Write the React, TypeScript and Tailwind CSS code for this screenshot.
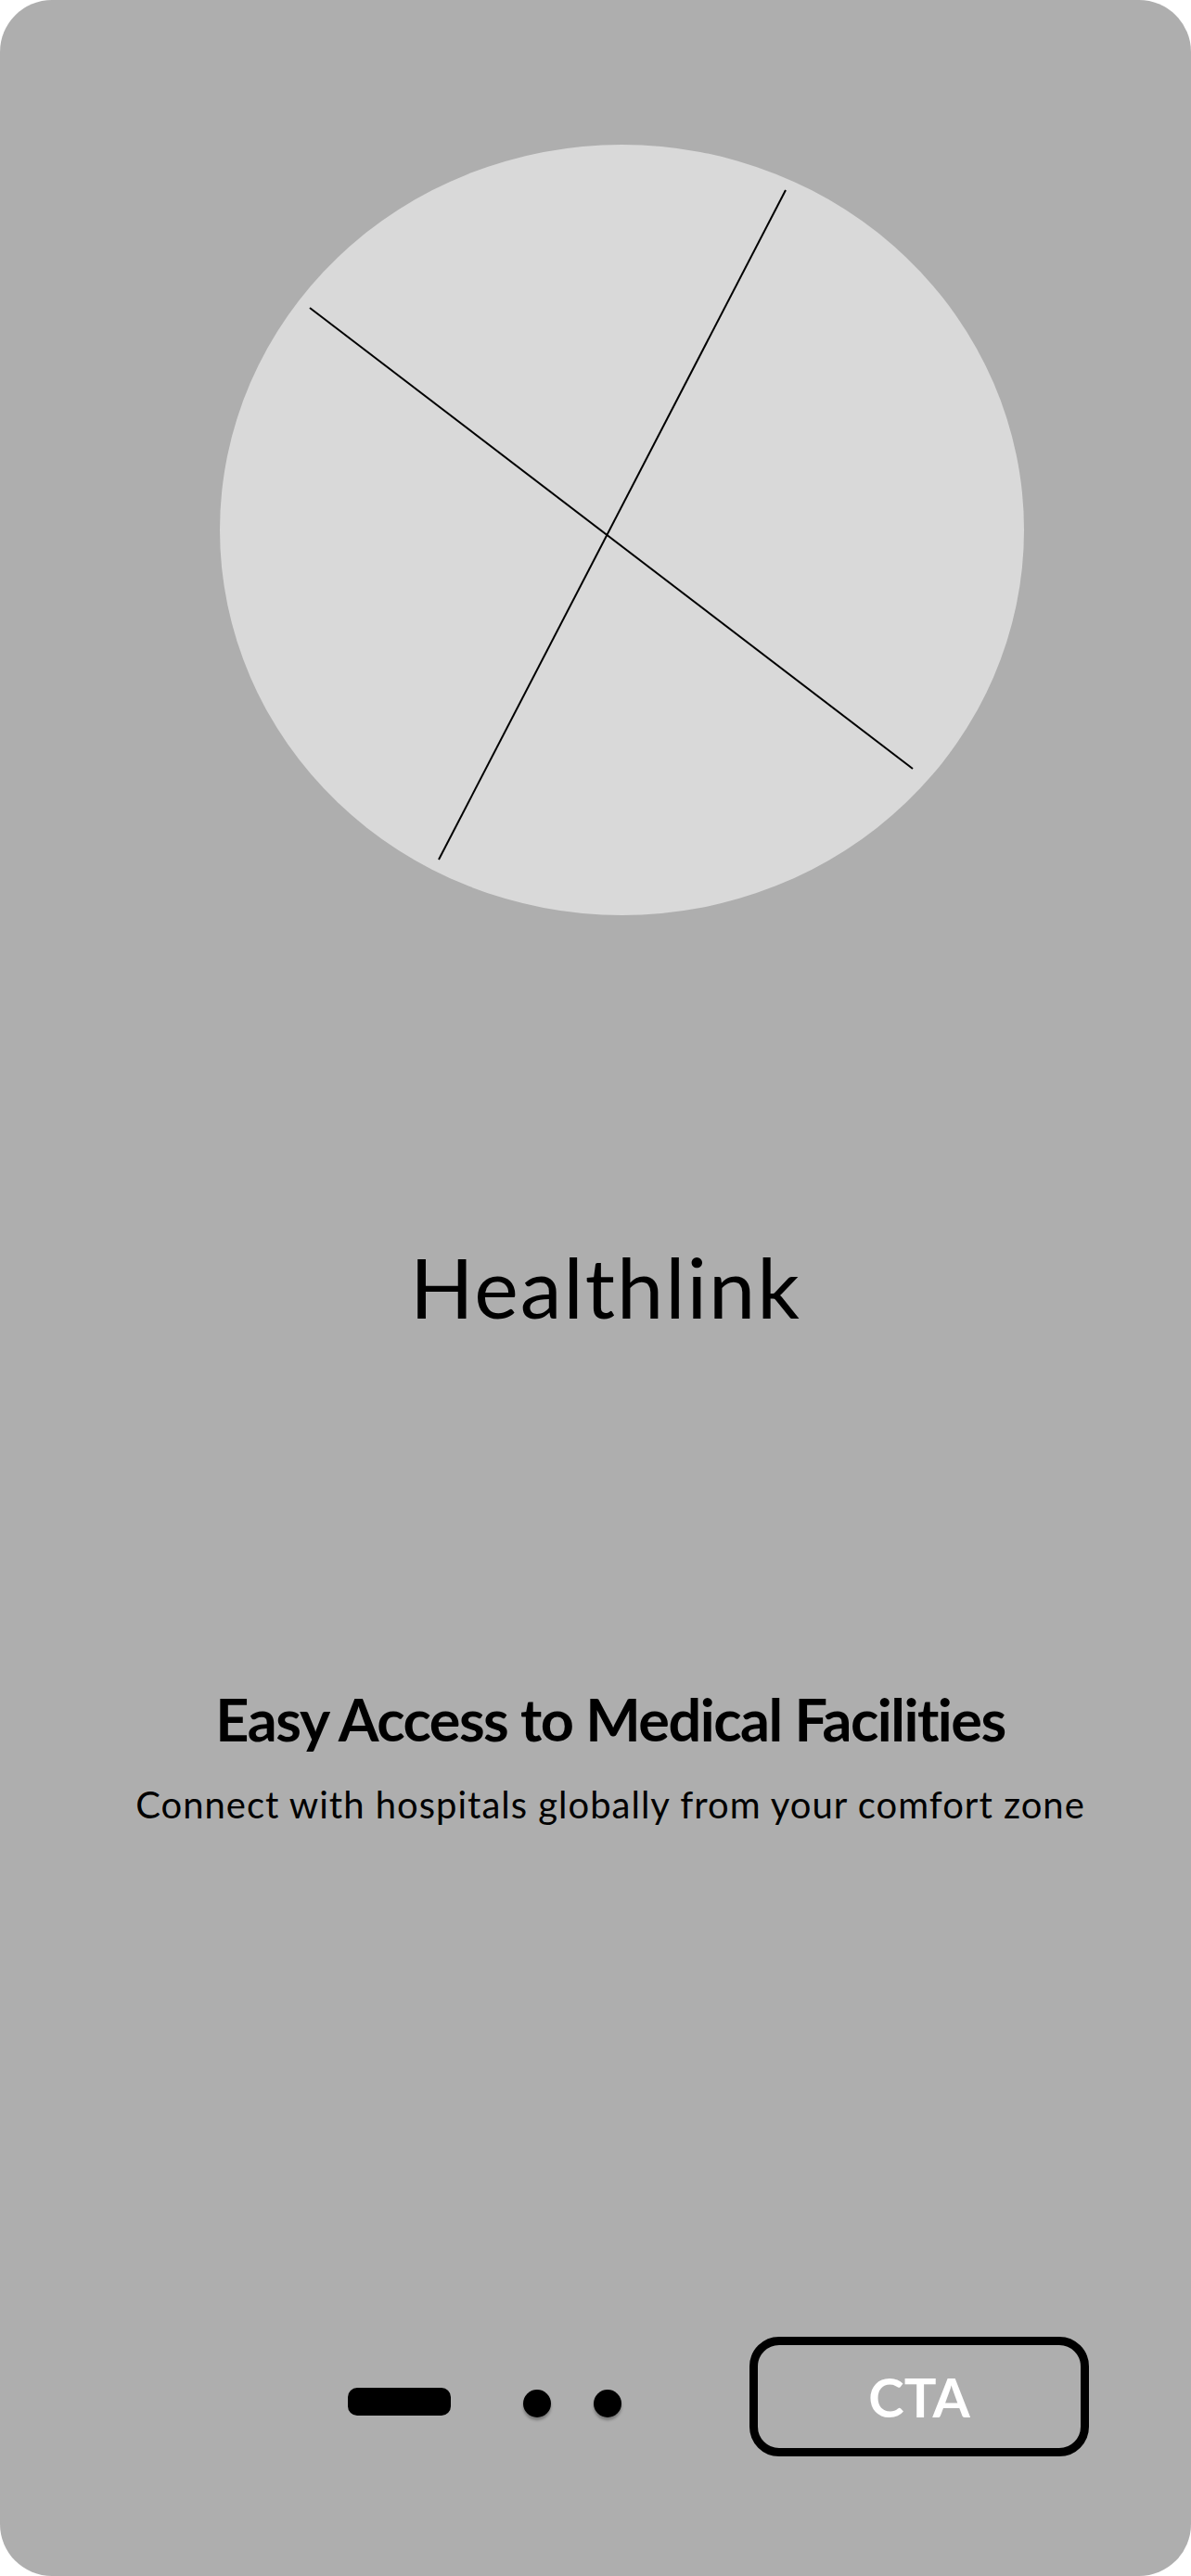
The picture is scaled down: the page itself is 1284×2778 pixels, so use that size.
import React from 'react';

const HeroPlaceholder: React.FC = () => (
    <svg width="867" height="831" viewBox="0 0 867 831" className="block">
        <ellipse cx="433.5" cy="415.5" rx="433.5" ry="415.5" fill="#d9d9d9" />
        <line x1="97" y1="176" x2="747" y2="673" stroke="#000" strokeWidth="2" />
        <line x1="610" y1="49" x2="236" y2="771" stroke="#000" strokeWidth="2" />
    </svg>
);

const App: React.FC = () => {
    return (
        <div className="w-[1284px] h-[2778px] bg-white">
            <div
                className="h-full w-full bg-[#aeaeae] rounded-[56px] flex flex-col text-black"
                style={{ fontFamily: 'Lato, "Open Sans", sans-serif' }}
            >
                {/* Hero */}
                <div className="mt-[156px] ml-[237px]">
                    <HeroPlaceholder />
                </div>

                {/* Brand */}
                <h1 className="mt-[355px] pl-[22px] text-center text-[90px] leading-none font-normal tracking-[2px]">Healthlink</h1>

                {/* Copy */}
                <div className="mt-[390px] pl-[32px] flex flex-col items-center">
                    <h2 className="text-[63px] leading-none font-bold tracking-[-1.5px]">Easy Access to Medical Facilities</h2>
                    <p className="mt-[41px] text-[40px] leading-none tracking-[1px]">Connect with hospitals globally from your comfort zone</p>
                </div>

                {/* Footer */}
                <div className="mt-auto mb-[129px] flex items-center">
                    <div className="ml-[375px] mt-[10px] w-[111px] h-[30px] rounded-[10px] bg-black"></div>
                    <div className="ml-[78px] mt-[14px] w-[30px] h-[30px] rounded-full bg-black shadow-[0_3px_3px_rgba(0,0,0,0.3)]"></div>
                    <div className="ml-[46px] mt-[14px] w-[30px] h-[30px] rounded-full bg-black shadow-[0_3px_3px_rgba(0,0,0,0.3)]"></div>
                    <button className="ml-[138px] w-[366px] h-[129px] rounded-[32px] border-[9px] border-black flex items-center justify-center text-white text-[58px] font-bold leading-none">
                        CTA
                    </button>
                </div>
            </div>
        </div>
    );
};

export default App;
